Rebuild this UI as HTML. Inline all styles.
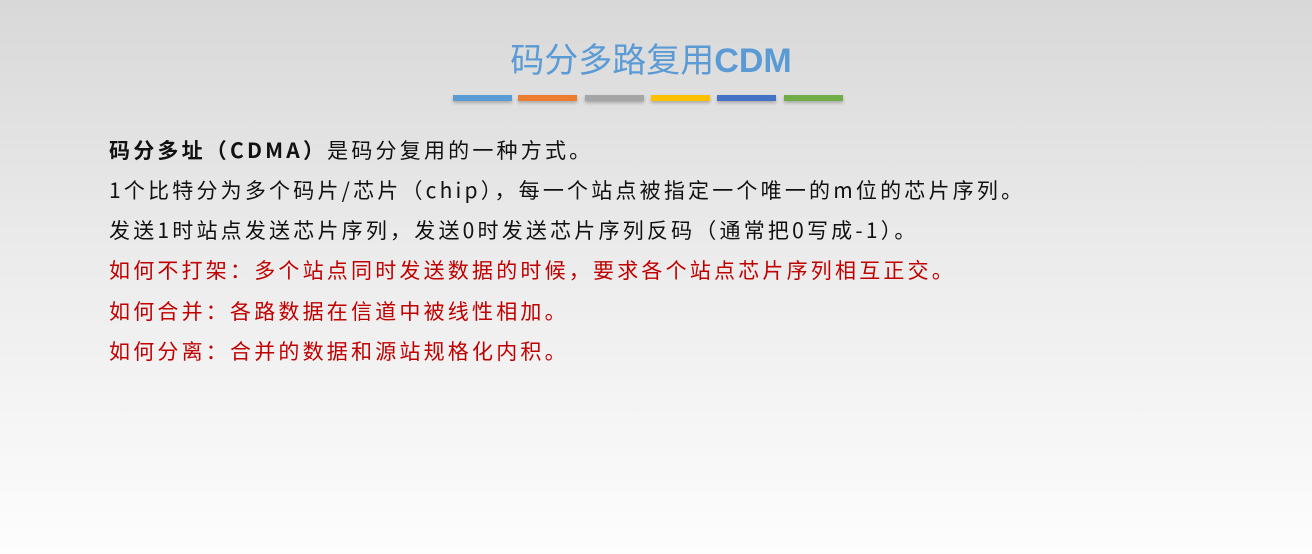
<!DOCTYPE html>
<html><head><meta charset="utf-8"><style>
html,body{margin:0;padding:0}
body{width:1312px;height:554px;position:relative;overflow:hidden;background:linear-gradient(#d8d8d8 0%,#ebebeb 45%,#fdfdfd 100%);font-family:"Liberation Sans","Noto Sans CJK SC",sans-serif}
h1{position:absolute;top:38px;left:0;width:1302px;margin:0;text-align:center;font-size:34px;font-weight:normal;color:#5b9bd5;line-height:46px}
h1 b{font-weight:bold}
.bar{position:absolute;top:95px;height:6px;width:59px;box-shadow:0 2px 3px rgba(0,0,0,.25)}
.t{position:absolute;left:109px;font-size:21px;line-height:26px;color:#111;white-space:nowrap;font-family:"Noto Sans CJK SC","Liberation Sans",sans-serif;letter-spacing:3.2px}
.r{color:#c00000}
</style></head><body>
<h1>码分多路复用<b>CDM</b></h1>
<div class="bar" style="left:453px;background:#5b9bd5"></div>
<div class="bar" style="left:518px;background:#ed7d31"></div>
<div class="bar" style="left:585px;background:#a5a5a5"></div>
<div class="bar" style="left:651px;background:#ffc000"></div>
<div class="bar" style="left:717px;background:#4472c4"></div>
<div class="bar" style="left:784px;background:#70ad47"></div>
<div class="t" style="top:137px"><b>码分多址（CDMA）</b>是码分复用的一种方式。</div>
<div class="t" style="top:177px">1个比特分为多个码片/芯片（chip），每一个站点被指定一个唯一的m位的芯片序列。</div>
<div class="t" style="top:217px">发送1时站点发送芯片序列，发送0时发送芯片序列反码（通常把0写成-1）。</div>
<div class="t r" style="top:257px">如何不打架：多个站点同时发送数据的时候，要求各个站点芯片序列相互正交。</div>
<div class="t r" style="top:298px">如何合并：各路数据在信道中被线性相加。</div>
<div class="t r" style="top:338px">如何分离：合并的数据和源站规格化内积。</div>
</body></html>
